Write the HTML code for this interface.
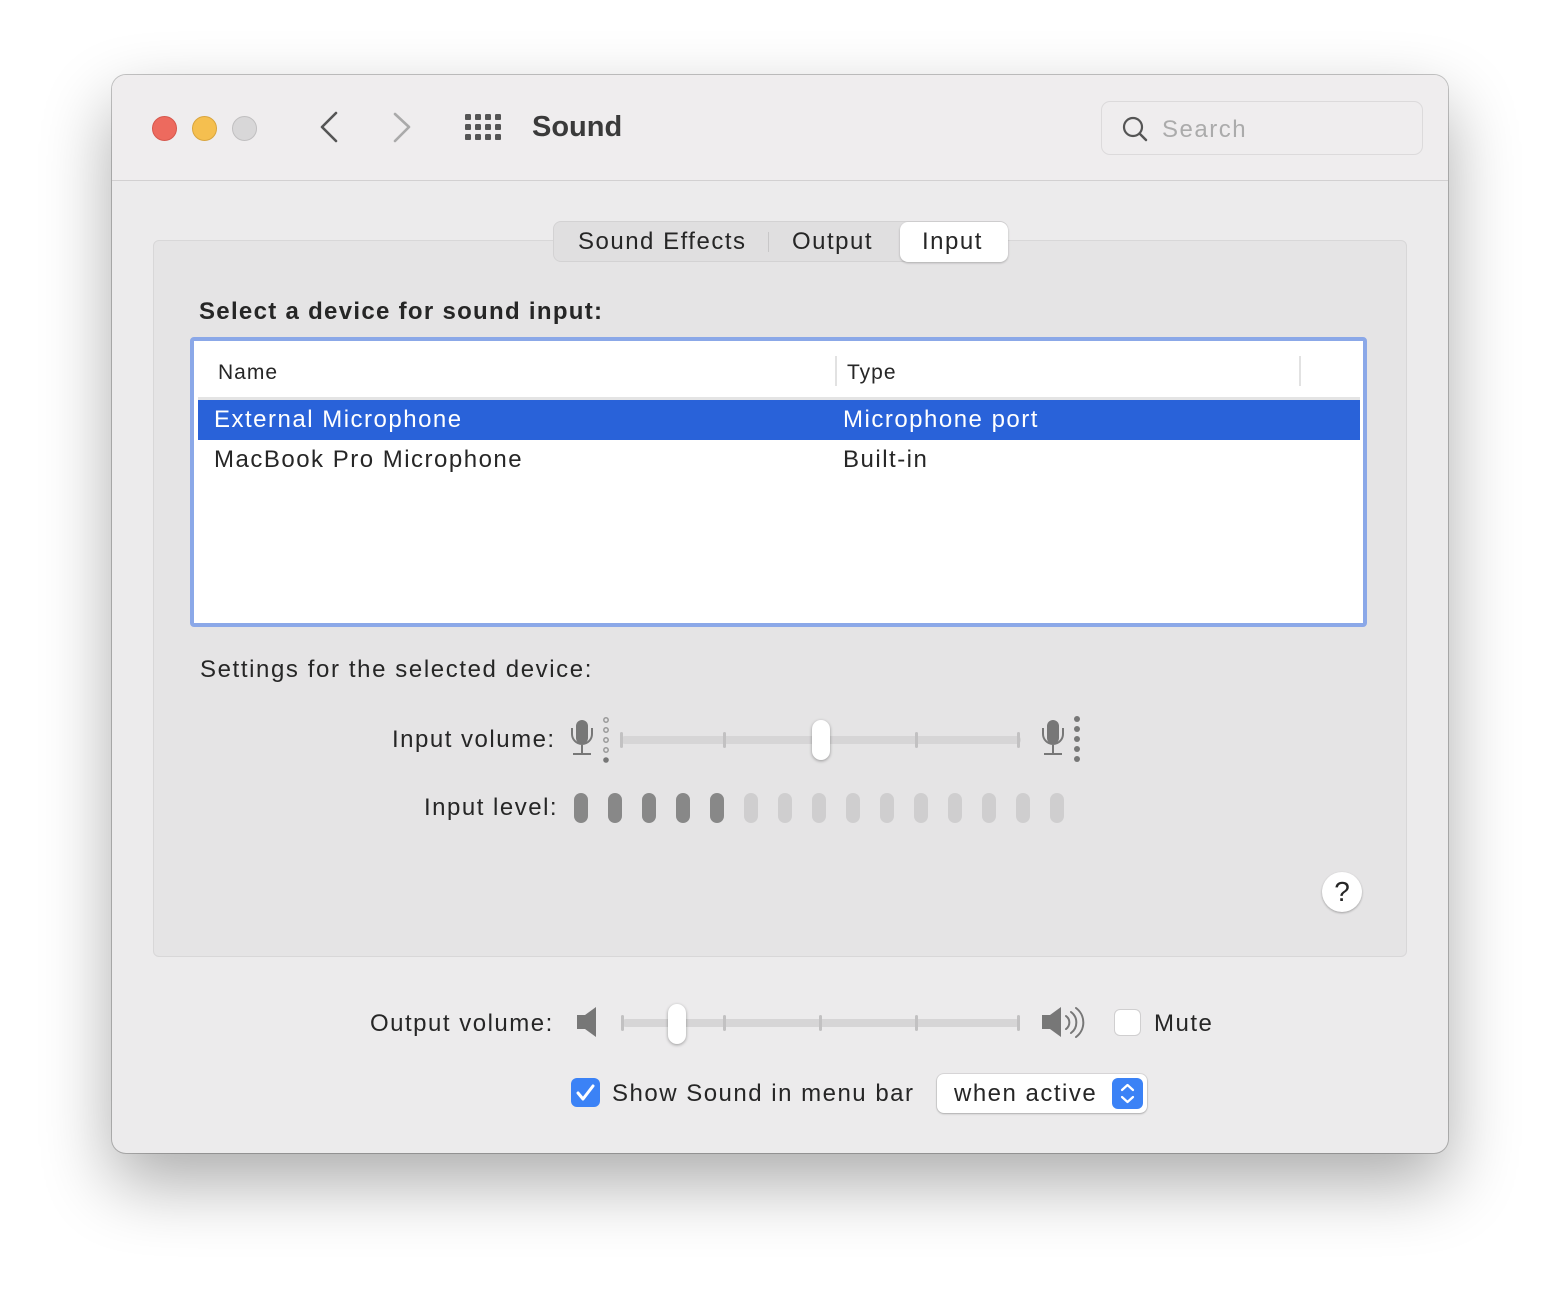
<!DOCTYPE html>
<html><head><meta charset="utf-8"><style>
*{margin:0;padding:0;box-sizing:border-box}
body{width:1560px;height:1302px;background:#fff;font-family:"Liberation Sans",sans-serif;position:relative;overflow:hidden;color:#262626}
.a{position:absolute}
.win{left:112px;top:75px;width:1336px;height:1078px;border-radius:14px;background:#ecebec;box-shadow:0 30px 70px rgba(0,0,0,.33),0 0 0 1px rgba(0,0,0,.22);overflow:hidden}
.tb{left:0;top:0;width:1336px;height:106px;background:#efedee;border-bottom:1px solid #d2d0d1}
.dot{width:25px;height:25px;border-radius:50%;top:41px}
.t{font-size:24px;white-space:nowrap;letter-spacing:1.5px}
.bar{width:14px;height:30px;border-radius:7px;top:793px}
</style></head><body>
<div class="a win">
 <div class="a tb"></div>
</div>
<div class="a dot" style="left:152px;top:116px;background:#ed6a5e;border:1px solid #d6574c"></div>
<div class="a dot" style="left:192px;top:116px;background:#f5bf4f;border:1px solid #d9a53d"></div>
<div class="a dot" style="left:232px;top:116px;background:#d8d7d8;border:1px solid #c0bfc0"></div>
<svg class="a" style="left:310px;top:108px" width="120" height="40">
 <polyline points="26,5 12,19 26,33" fill="none" stroke="#555" stroke-width="2.6" stroke-linecap="round" stroke-linejoin="round"/>
 <polyline points="85,6 99,19 85,33" fill="none" stroke="#aaa" stroke-width="2.6" stroke-linecap="round" stroke-linejoin="round"/>
</svg>
<svg class="a" style="left:465px;top:114px" width="40" height="30">
 <g fill="#555">
 <rect x="0" y="0" width="6" height="6" rx="1.3"/><rect x="10" y="0" width="6" height="6" rx="1.3"/><rect x="20" y="0" width="6" height="6" rx="1.3"/><rect x="30" y="0" width="6" height="6" rx="1.3"/>
 <rect x="0" y="10" width="6" height="6" rx="1.3"/><rect x="10" y="10" width="6" height="6" rx="1.3"/><rect x="20" y="10" width="6" height="6" rx="1.3"/><rect x="30" y="10" width="6" height="6" rx="1.3"/>
 <rect x="0" y="20" width="6" height="6" rx="1.3"/><rect x="10" y="20" width="6" height="6" rx="1.3"/><rect x="20" y="20" width="6" height="6" rx="1.3"/><rect x="30" y="20" width="6" height="6" rx="1.3"/>
 </g></svg>
<div class="a" style="left:532px;top:111px;font-size:29px;font-weight:bold;color:#3a3a3a">Sound</div>
<div class="a" style="left:1101px;top:101px;width:322px;height:54px;border:1px solid #dcdadb;border-radius:9px;background:#efedee"></div>
<svg class="a" style="left:1120px;top:114px" width="30" height="30"><circle cx="13" cy="13" r="9" fill="none" stroke="#555" stroke-width="2.2"/><line x1="19.5" y1="19.5" x2="26" y2="26" stroke="#555" stroke-width="2.4" stroke-linecap="round"/></svg>
<div class="a t" style="left:1162px;top:116px;color:#ababab">Search</div>

<div class="a" style="left:153px;top:240px;width:1254px;height:717px;background:#e5e4e5;border:1px solid #d8d7d8;border-radius:6px"></div>
<div class="a" style="left:553px;top:221px;width:455px;height:41px;background:#e0dfe0;border:1px solid #d3d2d3;border-radius:8px"></div>
<div class="a" style="left:768px;top:232px;width:1px;height:20px;background:#c8c7c8"></div>
<div class="a" style="left:900px;top:222px;width:108px;height:40px;background:#fff;border-radius:8px;box-shadow:0 1px 2px rgba(0,0,0,.25)"></div>
<div class="a t" style="left:578px;top:228px">Sound Effects</div>
<div class="a t" style="left:792px;top:228px">Output</div>
<div class="a t" style="left:922px;top:228px">Input</div>

<div class="a t" style="left:199px;top:298px;font-weight:bold;letter-spacing:1.3px">Select a device for sound input:</div>
<div class="a" style="left:190px;top:337px;width:1177px;height:290px;border:4px solid #8ba8e8;border-radius:4px;background:#fff"></div>
<div class="a" style="left:835px;top:356px;width:2px;height:30px;background:#e2e2e2"></div>
<div class="a" style="left:1299px;top:356px;width:2px;height:30px;background:#e2e2e2"></div>
<div class="a" style="left:218px;top:361px;font-size:21px;letter-spacing:1px">Name</div>
<div class="a" style="left:847px;top:361px;font-size:21px;letter-spacing:1px">Type</div>
<div class="a" style="left:198px;top:397px;width:1162px;height:3px;background:#e4e4e4"></div>
<div class="a" style="left:198px;top:400px;width:1162px;height:40px;background:#2962d9"></div>
<div class="a t" style="left:214px;top:406px;color:#fff">External Microphone</div>
<div class="a t" style="left:843px;top:406px;color:#fff">Microphone port</div>
<div class="a t" style="left:214px;top:446px">MacBook Pro Microphone</div>
<div class="a t" style="left:843px;top:446px">Built-in</div>

<div class="a t" style="left:200px;top:656px;letter-spacing:1.6px">Settings for the selected device:</div>
<div class="a t" style="left:392px;top:726px">Input volume:</div>
<div class="a t" style="left:424px;top:794px">Input level:</div>

<svg class="a" style="left:560px;top:710px" width="540" height="60">
 <g fill="none" stroke="#777" stroke-width="2"><path d="M12 18 v6 a10 10 0 0 0 20 0 v-6 M22 34 v9 M13 44 h18"/></g>
 <rect x="16" y="10" width="12" height="24" rx="6" fill="#777"/>
 <g fill="none" stroke="#999" stroke-width="1.5"><circle cx="46" cy="10" r="2.2"/><circle cx="46" cy="20" r="2.2"/><circle cx="46" cy="30" r="2.2"/><circle cx="46" cy="40" r="2.2"/></g>
 <circle cx="46" cy="50" r="2.8" fill="#777"/>
 <rect x="61" y="26" width="400" height="8" rx="4" fill="#d6d5d6"/>
 <g fill="#c2c1c2"><rect x="60" y="22" width="3" height="16" rx="1.5"/><rect x="163" y="22" width="3" height="16" rx="1.5"/><rect x="355" y="22" width="3" height="16" rx="1.5"/><rect x="457" y="22" width="3" height="16" rx="1.5"/></g>
 <g fill="none" stroke="#777" stroke-width="2"><path d="M483 18 v6 a10 10 0 0 0 20 0 v-6 M493 34 v9 M484 44 h18"/></g>
 <rect x="487" y="10" width="12" height="24" rx="6" fill="#777"/>
 <g fill="#777"><circle cx="517" cy="9" r="3"/><circle cx="517" cy="19" r="3"/><circle cx="517" cy="29" r="3"/><circle cx="517" cy="39" r="3"/><circle cx="517" cy="49" r="3"/></g>
</svg>
<div class="a" style="left:812px;top:720px;width:18px;height:40px;border-radius:9px;background:#fff;box-shadow:0 1px 3px rgba(0,0,0,.35)"></div>

<div class="a bar" style="left:574px;background:#888"></div>
<div class="a bar" style="left:608px;background:#888"></div>
<div class="a bar" style="left:642px;background:#888"></div>
<div class="a bar" style="left:676px;background:#888"></div>
<div class="a bar" style="left:710px;background:#888"></div>
<div class="a bar" style="left:744px;background:#cfcecf"></div>
<div class="a bar" style="left:778px;background:#cfcecf"></div>
<div class="a bar" style="left:812px;background:#cfcecf"></div>
<div class="a bar" style="left:846px;background:#cfcecf"></div>
<div class="a bar" style="left:880px;background:#cfcecf"></div>
<div class="a bar" style="left:914px;background:#cfcecf"></div>
<div class="a bar" style="left:948px;background:#cfcecf"></div>
<div class="a bar" style="left:982px;background:#cfcecf"></div>
<div class="a bar" style="left:1016px;background:#cfcecf"></div>
<div class="a bar" style="left:1050px;background:#cfcecf"></div>

<div class="a" style="left:1322px;top:872px;width:40px;height:40px;border-radius:50%;background:#fff;box-shadow:0 1px 2px rgba(0,0,0,.3);text-align:center;font-size:28px;line-height:40px;color:#262626">?</div>

<div class="a t" style="left:370px;top:1010px">Output volume:</div>
<svg class="a" style="left:570px;top:1000px" width="530" height="50">
 <path d="M7 15 h8 l11 -8 v30 l-11 -8 h-8z" fill="#777"/>
 <rect x="52" y="19" width="398" height="8" rx="4" fill="#d6d5d6"/>
 <g fill="#c2c1c2"><rect x="51" y="15" width="3" height="16" rx="1.5"/><rect x="153" y="15" width="3" height="16" rx="1.5"/><rect x="249" y="15" width="3" height="16" rx="1.5"/><rect x="345" y="15" width="3" height="16" rx="1.5"/><rect x="447" y="15" width="3" height="16" rx="1.5"/></g>
 <path d="M472 15 h8 l11 -8 v30 l-11 -8 h-8z" fill="#777"/>
 <g fill="none" stroke="#777" stroke-width="2" stroke-linecap="round"><path d="M496 16 a8 8 0 0 1 0 13"/><path d="M501 12 a13 13 0 0 1 0 21"/><path d="M506 8 a18 18 0 0 1 0 29"/></g>
</svg>
<div class="a" style="left:668px;top:1004px;width:18px;height:40px;border-radius:9px;background:#fff;box-shadow:0 1px 3px rgba(0,0,0,.35)"></div>
<div class="a" style="left:1114px;top:1009px;width:27px;height:27px;border-radius:6px;background:#fff;border:1px solid #d0cfd0"></div>
<div class="a t" style="left:1154px;top:1010px">Mute</div>

<div class="a" style="left:571px;top:1078px;width:29px;height:29px;border-radius:6px;background:#3b82f6"></div>
<svg class="a" style="left:571px;top:1078px" width="29" height="29"><polyline points="7,15 12,21 22,8" fill="none" stroke="#fff" stroke-width="3" stroke-linecap="round" stroke-linejoin="round"/></svg>
<div class="a t" style="left:612px;top:1080px">Show Sound in menu bar</div>
<div class="a" style="left:937px;top:1074px;width:210px;height:39px;border-radius:7px;background:#fff;box-shadow:0 0 0 1px rgba(0,0,0,.08),0 1px 2px rgba(0,0,0,.2)"></div>
<div class="a t" style="left:954px;top:1080px">when active</div>
<div class="a" style="left:1112px;top:1078px;width:31px;height:31px;border-radius:6px;background:#3b82f6"></div>
<svg class="a" style="left:1112px;top:1078px" width="31" height="31"><g fill="none" stroke="#fff" stroke-width="2.2" stroke-linecap="round" stroke-linejoin="round"><polyline points="10,12 15.5,7 21,12"/><polyline points="10,19 15.5,24 21,19"/></g></svg>
</body></html>
